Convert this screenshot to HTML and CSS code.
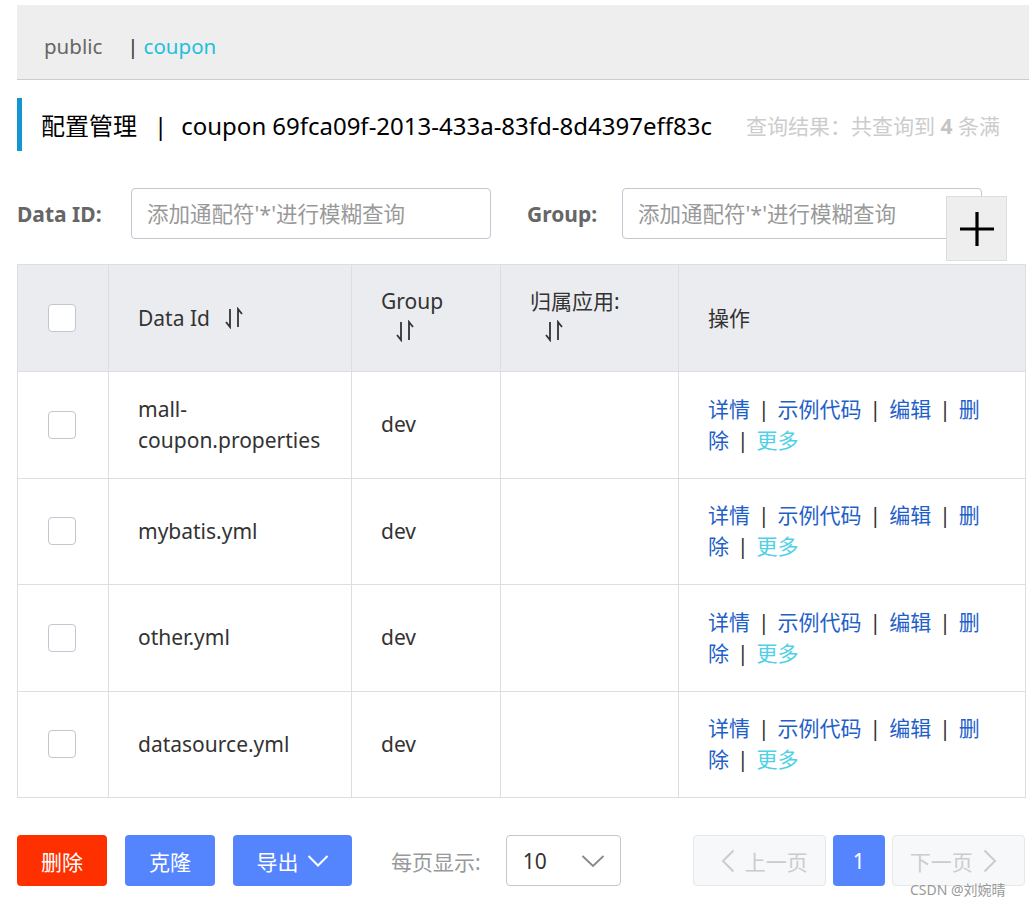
FILE: index.html
```html
<!DOCTYPE html>
<html lang="zh-CN">
<head>
<meta charset="utf-8">
<title>配置管理</title>
<link rel="stylesheet" href="styles.css">
</head>
<body>
<div class="page">
  <div class="ns-bar">
    <span class="ns-item">public</span>
    <span class="ns-sep">|</span><span class="ns-item active">coupon</span>
  </div>

  <div class="title-row">
    <div class="title">配置管理<span class="t-sep">|</span>coupon<span class="t-id">69fca09f-2013-433a-83fd-8d4397eff83c</span></div>
    <div class="result">查询结果：共查询到 <b>4</b> 条满</div>
  </div>

  <div class="search-row">
    <label class="s-label id-label">Data ID:</label>
    <input class="s-input" type="text" placeholder="添加通配符'*'进行模糊查询">
    <label class="s-label group-label">Group:</label>
    <div class="group-wrap">
      <input class="s-input" type="text" placeholder="添加通配符'*'进行模糊查询">
      <button class="plus-btn" aria-label="add">
        <svg width="38" height="38" viewBox="0 0 38 38"><path d="M19 2V36M2 19H36" stroke="#000" stroke-width="3.2" fill="none"/></svg>
      </button>
    </div>
  </div>

  <table class="cfg-table">
    <colgroup>
      <col class="c-check"><col class="c-id"><col class="c-group"><col class="c-app"><col class="c-op">
    </colgroup>
    <thead>
      <tr>
        <th class="cell-check"><span class="cb"></span></th>
        <th>Data Id <svg class="sort inline" viewBox="0 0 18 22"><path d="M5 2V20L1 15M13 20V2L17 7" stroke="#333" stroke-width="1.8" fill="none"/></svg></th>
        <th><div class="h-two">Group<br><svg class="sort under" viewBox="0 0 18 22"><path d="M5 2V20L1 15M13 20V2L17 7" stroke="#333" stroke-width="1.8" fill="none"/></svg></div></th>
        <th><div class="h-two">归属应用:<br><svg class="sort under" viewBox="0 0 18 22"><path d="M5 2V20L1 15M13 20V2L17 7" stroke="#333" stroke-width="1.8" fill="none"/></svg></div></th>
        <th>操作</th>
      </tr>
    </thead>
    <tbody>
      <tr>
        <td class="cell-check"><span class="cb"></span></td>
        <td>mall-coupon.properties</td>
        <td>dev</td>
        <td></td>
        <td class="ops"><a>详情</a><span class="sep">|</span><a>示例代码</a><span class="sep">|</span><a>编辑</a><span class="sep">|</span><a>删除</a><span class="sep">|</span><a class="more">更多</a></td>
      </tr>
      <tr>
        <td class="cell-check"><span class="cb"></span></td>
        <td>mybatis.yml</td>
        <td>dev</td>
        <td></td>
        <td class="ops"><a>详情</a><span class="sep">|</span><a>示例代码</a><span class="sep">|</span><a>编辑</a><span class="sep">|</span><a>删除</a><span class="sep">|</span><a class="more">更多</a></td>
      </tr>
      <tr>
        <td class="cell-check"><span class="cb"></span></td>
        <td>other.yml</td>
        <td>dev</td>
        <td></td>
        <td class="ops"><a>详情</a><span class="sep">|</span><a>示例代码</a><span class="sep">|</span><a>编辑</a><span class="sep">|</span><a>删除</a><span class="sep">|</span><a class="more">更多</a></td>
      </tr>
      <tr>
        <td class="cell-check"><span class="cb"></span></td>
        <td>datasource.yml</td>
        <td>dev</td>
        <td></td>
        <td class="ops"><a>详情</a><span class="sep">|</span><a>示例代码</a><span class="sep">|</span><a>编辑</a><span class="sep">|</span><a>删除</a><span class="sep">|</span><a class="more">更多</a></td>
      </tr>
    </tbody>
  </table>

  <div class="footer">
    <button class="btn btn-red">删除</button>
    <button class="btn btn-blue">克隆</button>
    <button class="btn btn-blue btn-export">导出<svg class="chev" viewBox="0 0 22 14"><path d="M1.5 2L11 11.5L20.5 2" stroke="#fff" stroke-width="2" fill="none"/></svg></button>
    <span class="per-page">每页显示:</span>
    <div class="select">
      <span>10</span>
      <svg class="sel-chev" viewBox="0 0 24 14"><path d="M1.5 2L12 12L22.5 2" stroke="#888" stroke-width="1.8" fill="none"/></svg>
    </div>
    <div class="pager">
      <button class="pg pg-nav"><svg class="pg-chev" viewBox="0 0 14 24"><path d="M12.5 1.5L2 12L12.5 22.5" stroke="#ccc" stroke-width="2" fill="none"/></svg>上一页</button>
      <button class="pg pg-cur">1</button>
      <button class="pg pg-nav">下一页<svg class="pg-chev" viewBox="0 0 14 24"><path d="M1.5 1.5L12 12L1.5 22.5" stroke="#ccc" stroke-width="2" fill="none"/></svg></button>
    </div>
  </div>
  <div class="watermark">CSDN @刘婉晴</div>
</div>
</body>
</html>
```

FILE: styles.css
```css
html, body {
  margin: 0;
  padding: 0;
  background: #fff;
  overflow: hidden;
}
body {
  font-family: "Noto Sans", "Noto Sans CJK SC", sans-serif;
  font-size: 21px;
  color: #333;
}
.page {
  position: relative;
  padding: 5px 0 0 17px;
  width: 1012px;
  height: 902px;
}

/* namespace bar */
.ns-bar {
  height: 66px;
  width: 1030px;
  background: #eee;
  border-bottom: 1px solid #ccc;
  display: flex;
  align-items: center;
  padding: 8px 0 0 27px;
  box-sizing: content-box;
  color: #666;
  font-size: 20.5px;
}
.ns-item { color: #666; }
.ns-item.active { color: #1ec0dc; }
.ns-sep { margin: 0 5px 0 25px; color: #333; }

/* title */
.title-row {
  margin-top: 18px;
  height: 53px;
  display: flex;
  align-items: center;
  border-left: 5px solid #1396cf;
  padding-left: 19px;
  white-space: nowrap;
}
.title {
  font-size: 24px;
  color: #000;
}
.t-sep { margin: 0 14px 0 17px; }
.t-id { margin-left: 6px; }
.result {
  margin-left: 34px;
  color: #ccc;
  font-size: 21px;
}
.result b { color: #c4c4c4; }

/* search */
.search-row {
  margin-top: 37px;
  display: flex;
  align-items: center;
  height: 51px;
}
.s-label {
  font-weight: bold;
  color: #666;
  font-size: 21px;
  box-sizing: border-box;
}
.id-label { width: 114px; }
.group-label { margin-left: 36px; width: 95px; }
.s-input {
  width: 360px;
  height: 51px;
  box-sizing: border-box;
  border: 1px solid #c4c6cf;
  border-radius: 4px;
  padding: 0 15px;
  font-family: "Noto Sans", "Noto Sans CJK SC", sans-serif;
  font-size: 21.5px;
  color: #333;
  outline: none;
}
.s-input::placeholder { color: #999; }
.group-wrap { position: relative; }
.plus-btn {
  position: absolute;
  left: 324px;
  top: 8px;
  width: 61px;
  height: 65px;
  background: #eee;
  border: 1px solid #ddd;
  padding: 0;
  display: flex;
  align-items: center;
  justify-content: center;
}

/* table */
.cfg-table {
  margin-top: 25px;
  width: 1008px;
  border-collapse: collapse;
  table-layout: fixed;
  font-size: 21px;
  color: #333;
}
.c-check { width: 91px; }
.c-id { width: 243px; }
.c-group { width: 149px; }
.c-app { width: 178px; }
.c-op { width: 347px; }
.cfg-table th, .cfg-table td {
  border: 1px solid #dcdee3;
  text-align: left;
  font-weight: normal;
  padding: 0 20px 0 29px;
  vertical-align: middle;
  line-height: 31px;
}
.cfg-table thead tr { height: 107px; background: #ebecf0; }
.cfg-table tbody tr { height: 106.5px; }
.cfg-table .cell-check { padding: 0 0 0 30px; }
.cb {
  display: block;
  width: 26px;
  height: 26px;
  border: 1px solid #c4c6cf;
  border-radius: 4px;
  background: #fff;
}
.sort { width: 18px; height: 22px; vertical-align: -3px; }
.sort.inline { margin-left: 10px; }
.sort.under { margin-left: 15px; }
.h-two { line-height: 30px; margin-top: -4px; }
.ops { padding-right: 34px !important; }
.ops a { color: #1f5fc9; }
.ops a.more { color: #4fd0e6; }
.ops .sep { padding: 0 8px; color: #333; }

/* footer */
.footer {
  margin-top: 37px;
  display: flex;
  align-items: center;
  height: 51px;
}
.btn {
  height: 51px;
  border: none;
  border-radius: 4px;
  color: #fff;
  font-family: "Noto Sans", "Noto Sans CJK SC", sans-serif;
  font-size: 21px;
  padding: 0;
  width: 90px;
  margin-right: 18px;
  display: flex;
  align-items: center;
  justify-content: center;
}
.btn-red { background: #ff3000; }
.btn-blue { background: #5584ff; }
.btn-export { width: 119px; }
.chev { width: 22px; height: 14px; margin-left: 8px; }
.per-page {
  color: #999;
  margin-left: 21px;
  margin-right: 25px;
}
.select {
  width: 115px;
  height: 51px;
  box-sizing: border-box;
  border: 1px solid #c4c6cf;
  border-radius: 4px;
  display: flex;
  align-items: center;
  justify-content: space-between;
  padding: 0 15px 0 16px;
  color: #333;
}
.sel-chev { width: 24px; height: 14px; }
.pager {
  margin-left: 72px;
  display: flex;
  gap: 7px;
}
.pg {
  height: 51px;
  border-radius: 4px;
  font-family: "Noto Sans", "Noto Sans CJK SC", sans-serif;
  font-size: 21px;
  padding: 0;
  display: flex;
  align-items: center;
  justify-content: center;
}
.pg-nav {
  width: 133px;
  background: #f7f8fa;
  border: 1px solid #e6e7eb;
  color: #ccc;
}
.pg-chev { width: 14px; height: 24px; margin: 0 10px; }
.pg-cur {
  width: 52px;
  background: #5584ff;
  border: none;
  color: #fff;
}
.watermark {
  position: absolute;
  left: 910px;
  top: 879px;
  font-size: 14px;
  color: #999;
  white-space: nowrap;
}
```
